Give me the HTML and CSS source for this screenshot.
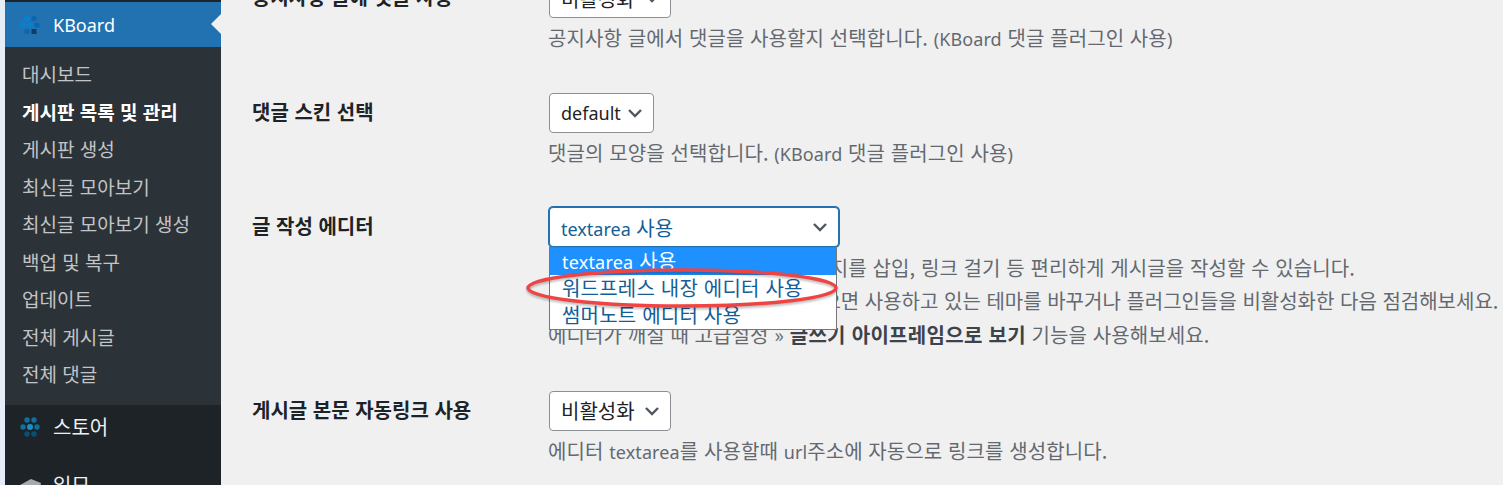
FILE: index.html
```html
<!DOCTYPE html>
<html lang="ko">
<head>
<meta charset="utf-8">
<title>KBoard</title>
<link rel="stylesheet" href="styles.css">
</head>
<body>
<div class="app">
  <aside class="side">
    <div class="side-top">
      <div class="current">
        <svg class="logo" viewBox="0 0 22 20"><g fill="#0a7fd0"><circle cx="8" cy="3.5" r="3"/><circle cx="15" cy="3.5" r="2.6" fill="#0868ad"/><circle cx="4" cy="10" r="3"/><circle cx="11" cy="10" r="3"/><circle cx="18" cy="10" r="2.6" fill="#0868ad"/><circle cx="8" cy="16.5" r="2.6" fill="#0868ad"/><rect x="12.5" y="14" width="5" height="5" fill="#123d63"/></g></svg>
        <span class="lat">KBoard</span>
      </div>
      <ul class="sub">
        <li>대시보드</li>
        <li class="on">게시판 목록 및 관리</li>
        <li>게시판 생성</li>
        <li>최신글 모아보기</li>
        <li>최신글 모아보기 생성</li>
        <li>백업 및 복구</li>
        <li>업데이트</li>
        <li>전체 게시글</li>
        <li>전체 댓글</li>
      </ul>
    </div>
    <div class="item">
      <svg class="logo" viewBox="0 0 22 20"><g fill="#0f6f9e"><circle cx="8" cy="3" r="2.7"/><circle cx="15" cy="3" r="2.7"/><circle cx="4" cy="10" r="2.7"/><circle cx="11" cy="10" r="3" fill="#1590c8"/><circle cx="18" cy="10" r="2.7"/><circle cx="8" cy="17" r="2.7" fill="#0a4f75"/><circle cx="15" cy="17" r="2.7" fill="#0a4f75"/></g></svg>
      <span>스토어</span>
    </div>
    <div class="item">
      <svg class="logo" viewBox="0 0 22 20"><path d="M1 10 L12 4 L22 8 L21 13 L12 11 L4 15Z" fill="#a7aaad"/></svg>
      <span>일모</span>
    </div>
  </aside>
  <main class="main">
    <section class="row">
      <h3 class="label">공지사항 글에 댓글 사용</h3>
      <div class="field">
        <div class="select sel-w1">비활성화<svg class="chev" viewBox="0 0 16 10"><path d="M2 2l6 6 6-6" /></svg></div>
        <p class="desc">공지사항 글에서 댓글을 사용할지 선택합니다. <span class="lat">(KBoard</span> 댓글 플러그인 사용<span class="lat">)</span></p>
      </div>
    </section>
    <section class="row">
      <h3 class="label">댓글 스킨 선택</h3>
      <div class="field">
        <div class="select sel-w2"><span class="lat">default</span><svg class="chev" viewBox="0 0 16 10"><path d="M2 2l6 6 6-6" /></svg></div>
        <p class="desc">댓글의 모양을 선택합니다. <span class="lat">(KBoard</span> 댓글 플러그인 사용<span class="lat">)</span></p>
      </div>
    </section>
    <section class="row row-editor">
      <h3 class="label">글 작성 에디터</h3>
      <div class="field">
        <div class="select sel-w3 focus"><span><span class="lat">textarea</span> 사용</span><svg class="chev" viewBox="0 0 16 10"><path d="M2 2l6 6 6-6" /></svg></div>
        <div class="desc-wrap">
          <p class="desc">워드프레스 내장 에디터 쓰면 이미지를 삽입, 링크 걸기 등 편리하게 게시글을 작성할 수 있습니다.</p>
          <p class="desc desc-long">에디터가 정상적으로 동작하지 않으면 사용하고 있는 테마를 바꾸거나 플러그인들을 비활성화한 다음 점검해보세요.</p>
          <p class="desc">에디터가 깨질 때 고급설정 » <b>글쓰기 아이프레임으로 보기</b> 기능을 사용해보세요.</p>
          <ul class="menu">
            <li class="sel"><span class="lat">textarea</span> 사용</li>
            <li>워드프레스 내장 에디터 사용</li>
            <li>썸머노트 에디터 사용</li>
          </ul>
          <svg class="ring" viewBox="0 0 320 48"><ellipse cx="161" cy="22" rx="154" ry="18"/></svg>
        </div>
      </div>
    </section>
    <section class="row">
      <h3 class="label">게시글 본문 자동링크 사용</h3>
      <div class="field">
        <div class="select sel-w1">비활성화<svg class="chev" viewBox="0 0 16 10"><path d="M2 2l6 6 6-6" /></svg></div>
        <p class="desc">에디터 <span class="lat">textarea</span>를 사용할때 <span class="lat">url</span>주소에 자동으로 링크를 생성합니다.</p>
      </div>
    </section>
  </main>
</div>
</body>
</html>
```
FILE: styles.css
```css
* { box-sizing: border-box; }
html, body { margin: 0; height: 485px; overflow: hidden; }
body {
  background: #f0f0f1;
  font-family: "Noto Sans CJK KR", "Noto Sans", sans-serif;
  color: #2c3338;
  font-size: 20px;
}
.lat { font-family: "Noto Sans", sans-serif; font-size: 18px; line-height: 1; }
.app { display: flex; height: 485px; padding-left: 5px; background: #e5eef8; }
.side { width: 216px; flex: none; background: #1d2327; padding-top: 2px; overflow: hidden; }
.side-top { background: #2c3338; }
.current {
  position: relative;
  display: flex; align-items: center; height: 45px;
  background: #2271b1; color: #fff;
}
.current::after {
  content: ""; position: absolute; right: 0; top: 12px;
  border: 10px solid transparent; border-right-color: #f0f0f1; border-left: 0;
}
.logo { width: 22px; height: 20px; margin: 0 12px 0 14px; flex: none; }
.sub { list-style: none; margin: 0; padding: 8px 0 12px; }
.sub li { height: 37.5px; line-height: 37px; padding-left: 17px; color: #c3c4c7; font-size: 19px; white-space: nowrap; }
.sub li.on { color: #fff; font-weight: 700; }
.item { display: flex; align-items: center; height: 44px; color: #f0f0f1; margin-bottom: 14px; }
.main { flex: 1; min-width: 0; height: 507px; overflow: hidden; background: #f0f0f1; padding-left: 31px; margin-top: -22px; }
.row { display: flex; padding-bottom: 41.5px; }
.row-editor { padding-bottom: 43px; }
.label { width: 297px; flex: none; margin: -1px 0 0; font-size: 20px; font-weight: 700; color: #1d2327; line-height: 40px; white-space: nowrap; }
.field { flex: 1; min-width: 0; }
.select {
  display: flex; align-items: center; justify-content: space-between;
  height: 40px; padding: 0 10px 0 11px;
  border: 1px solid #8c8f94; border-radius: 4px; background: #fff;
  color: #1d2327; font-size: 20px;
}
.sel-w1 { width: 122px; }
.sel-w2 { width: 105px; }
.sel-w3 { width: 290px; }
.focus { border-color: #2271b1; box-shadow: 0 0 0 1px #2271b1; color: #135e96; }
.chev { width: 16px; height: 10px; flex: none; }
.chev path { fill: none; stroke: #50575e; stroke-width: 2.4; }
.desc { margin: 6px 0 0 -1px; font-size: 20px; line-height: 27px; color: #646970; white-space: nowrap; letter-spacing: .1px; }
.desc-long { letter-spacing: 0; }
.desc b { color: #3c434a; letter-spacing: .3px; }
.desc-wrap { position: relative; display: flow-root; }
.desc-wrap .desc { margin-top: 6.5px; }
.menu {
  position: absolute; left: 0; top: 0; width: 288px; margin: 0; padding: 0; list-style: none;
  background: #fff; border: 1px solid #767676; color: #135e96; font-size: 20px;
}
.menu li { height: 27px; line-height: 26px; padding-left: 12px; white-space: nowrap; letter-spacing: .2px; }
.menu li.sel { background: #1e90ff; color: #fff; }
.ring { position: absolute; left: -28px; top: 19px; width: 320px; height: 48px; overflow: visible; filter: drop-shadow(0 2px 1px rgba(0,0,0,.25)); }
.ring ellipse { fill: none; stroke: #ef4444; stroke-width: 3.5; }
```
